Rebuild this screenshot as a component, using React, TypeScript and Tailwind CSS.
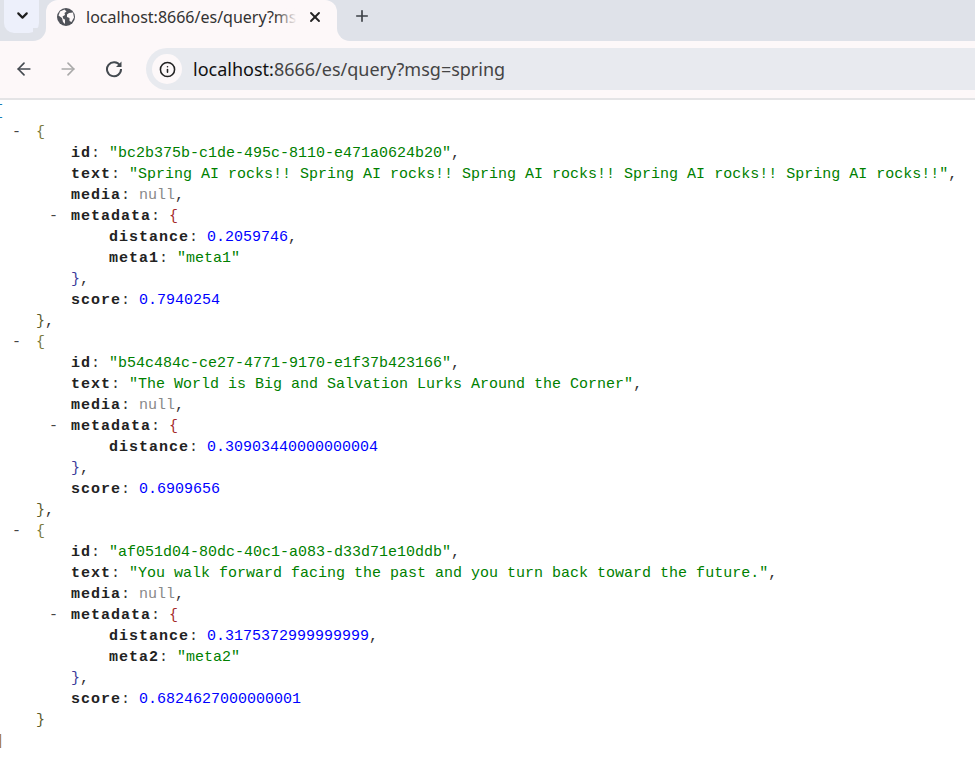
import { ArrowLeft, ArrowRight, ChevronDown, Info, Plus, X } from "lucide-react";
import { ReactNode } from "react";

const str = "text-[#008000]";
const num = "text-[#0000ff]";

function Key({ name }: { name: string }) {
  return (
    <>
      <b className="font-bold tracking-[1px] text-[#222]">{name}</b>
      <span className="text-[#333]">: </span>
    </>
  );
}

function Row({ name, value, color, comma }: { name: string; value: string; color: string; comma?: boolean }) {
  return (
    <div>
      <Key name={name} />
      <span className={color}>{value}</span>
      {comma && <span className="text-[#333]">,</span>}
    </div>
  );
}

function Toggle({ left }: { left: string }) {
  return <span className={`absolute ${left} top-0 text-[#444]`}>-</span>;
}

function Meta({ children }: { children: ReactNode }) {
  return (
    <>
      <div className="relative">
        <Toggle left="-left-[22px]" />
        <Key name="metadata" />
        <span className="text-[#a52a2a]">{"{"}</span>
      </div>
      <div className="pl-[38px]">{children}</div>
      <div>
        <span className="text-[#3a3a9a]">{"}"}</span>
        <span className="text-[#333]">,</span>
      </div>
    </>
  );
}

function Doc({ id, text, score, last, children }: { id: string; text: string; score: string; last?: boolean; children: ReactNode }) {
  return (
    <>
      <div className="relative pl-[36px]">
        <Toggle left="left-[12px]" />
        <span className="text-[#7a7a3a]">{"{"}</span>
      </div>
      <div className="pl-[71px]">
        <Row name="id" value={`"${id}"`} color={str} comma />
        <Row name="text" value={`"${text}"`} color={str} comma />
        <Row name="media" value="null" color="text-[#888]" comma />
        <Meta>{children}</Meta>
        <Row name="score" value={score} color={num} />
      </div>
      <div className="pl-[36px]">
        <span className="text-[#5a5a2a]">{"}"}</span>
        {!last && <span className="text-[#333]">,</span>}
      </div>
    </>
  );
}

function BrowserChrome() {
  return (
    <div className="font-['Noto_Sans','Liberation_Sans',sans-serif]">
      <div className="flex h-[41px] items-start bg-[#dfe2e9] pl-1">
        <button className="flex h-[33px] w-[35px] items-center justify-center rounded-b-[10px] bg-[#edf0fb]">
          <ChevronDown size={17} strokeWidth={3} className="-mt-[2px] ml-[1px] text-[#1f1f1f]" />
        </button>
        <div className="relative ml-[7px] flex h-[41px] w-[291px] items-center rounded-t-[12px] bg-[#fdf8f9] pb-[7px] pl-[11px]">
          {/* flared bottom corners of the active tab */}
          <span className="absolute bottom-0 -left-[13px] h-[13px] w-[13px] bg-[#fdf8f9]">
            <span className="block h-full w-full rounded-br-[13px] bg-[#dfe2e9]" />
          </span>
          <span className="absolute -right-[13px] bottom-0 h-[13px] w-[13px] bg-[#fdf8f9]">
            <span className="block h-full w-full rounded-bl-[13px] bg-[#dfe2e9]" />
          </span>
          <svg width="18" height="18" viewBox="0 0 18 18" className="shrink-0">
            <circle cx="9" cy="9" r="9" fill="#50535a" />
            <path d="M3 3.5 7.5 1.5 9.5 3.5 7.5 5 8 7 5.5 8.5 6.5 11 8 11.5 8 16 6 14 5 10 1.5 7.5Z" fill="#fdf8f9" />
            <path d="M12 5 16 4.5 17 9.5 14.5 14 12.5 13 12.5 10 10 9 10 6.5Z" fill="#fdf8f9" />
          </svg>
          <span className="relative ml-[11px] w-[211px] overflow-hidden text-[16px] whitespace-nowrap text-[#333]">
            localhost:8666/es/query?msg=spring
            <span className="absolute top-0 right-0 h-full w-[22px] bg-gradient-to-r from-transparent to-[#fdf8f9]" />
          </span>
          <X size={16} strokeWidth={2.8} className="ml-[10px] shrink-0 text-[#222]" />
        </div>
        <Plus size={18} strokeWidth={2.2} className="mt-[7px] ml-4 text-[#3c4046]" />
      </div>
      <div className="flex h-[59px] items-center border-b-2 border-[#e4e4e6] bg-[#fdf8f9] pb-[1px] pl-[14px]">
        <ArrowLeft size={20} strokeWidth={2} className="text-[#444a50]" />
        <ArrowRight size={20} strokeWidth={2} className="ml-[24px] text-[#aaa]" />
        <svg width="18" height="18" viewBox="0 0 18 18" fill="none" className="ml-[27px] text-[#444a50]">
          <path d="M15 5.6A7 7 0 1 0 16 9" stroke="currentColor" strokeWidth="2" />
          <path d="M16.5 1.5V7H11Z" fill="currentColor" />
        </svg>
        <div className="ml-[23px] flex h-[42px] flex-1 items-center rounded-l-[21px] bg-[#e8eaef] pl-[6px]">
          <span className="flex h-[30px] w-[30px] items-center justify-center rounded-full bg-[#fdf8f9]">
            <Info size={17} strokeWidth={2.2} className="text-[#222]" />
          </span>
          <span className="ml-[11px] text-[18px] text-[#444]">
            <span className="text-[#111]">localhost:</span>8666/es/query?msg=spring
          </span>
        </div>
      </div>
    </div>
  );
}

export default function App() {
  return (
    <div className="h-[761px] w-[975px] overflow-hidden bg-white">
      <BrowserChrome />
      <div className="pt-[1px] font-['Liberation_Mono',monospace] text-[15px] leading-[21px] whitespace-pre">
        <div className="-ml-[5px] text-[#1a7fb5]">[</div>
        <Doc id="bc2b375b-c1de-495c-8110-e471a0624b20" text="Spring AI rocks!! Spring AI rocks!! Spring AI rocks!! Spring AI rocks!! Spring AI rocks!!" score="0.7940254">
          <Row name="distance" value="0.2059746" color={num} comma />
          <Row name="meta1" value={'"meta1"'} color={str} />
        </Doc>
        <Doc id="b54c484c-ce27-4771-9170-e1f37b423166" text="The World is Big and Salvation Lurks Around the Corner" score="0.6909656">
          <Row name="distance" value="0.30903440000000004" color={num} />
        </Doc>
        <Doc id="af051d04-80dc-40c1-a083-d33d71e10ddb" text="You walk forward facing the past and you turn back toward the future." score="0.6824627000000001" last>
          <Row name="distance" value="0.3175372999999999" color={num} comma />
          <Row name="meta2" value={'"meta2"'} color={str} />
        </Doc>
        <div className="-ml-[5px] text-[#a5762a]">]</div>
      </div>
    </div>
  );
}
